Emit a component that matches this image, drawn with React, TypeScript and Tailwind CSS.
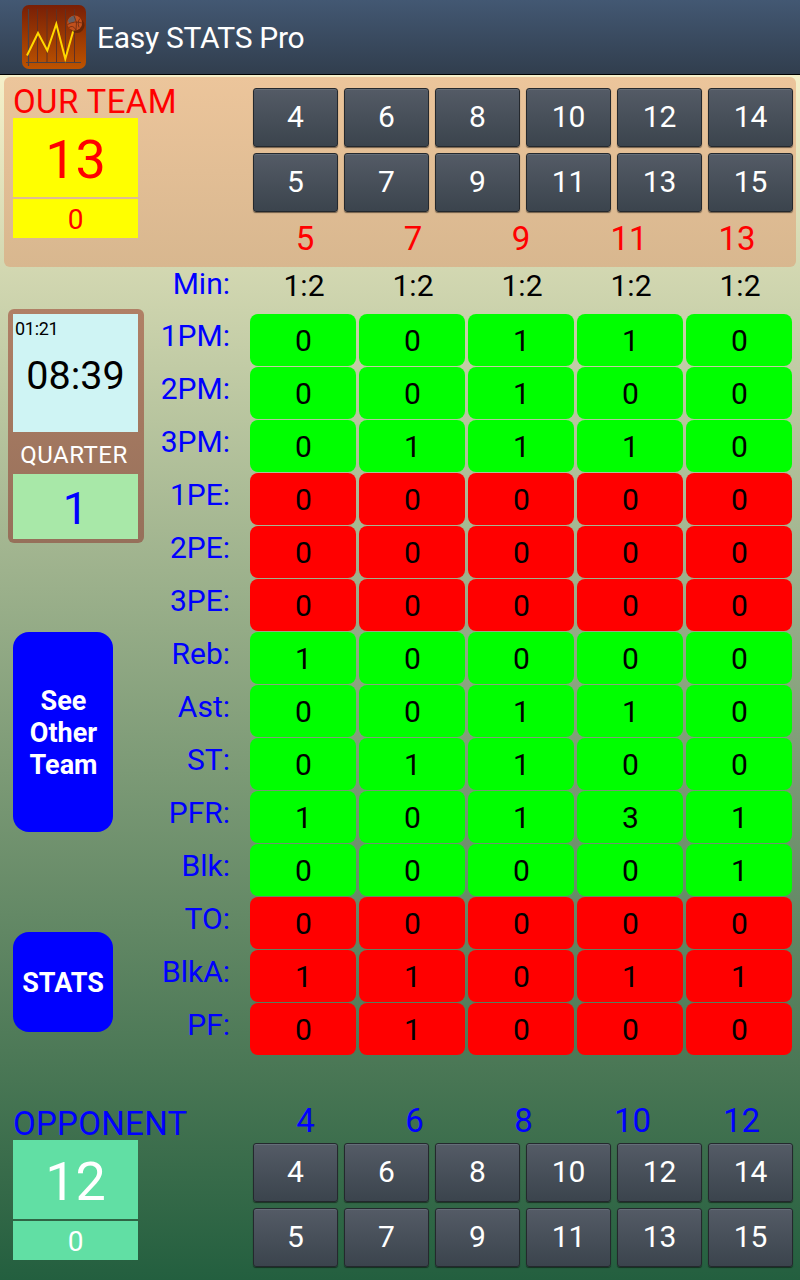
import React from 'react';
import clsx from 'clsx';

const players = [
  ['4', '6', '8', '10', '12', '14'],
  ['5', '7', '9', '11', '13', '15'],
];

const ourCourt = ['5', '7', '9', '11', '13'];
const opponentCourt = ['4', '6', '8', '10', '12'];

const stats = [
  { label: '1PM:', good: true, values: [0, 0, 1, 1, 0] },
  { label: '2PM:', good: true, values: [0, 0, 1, 0, 0] },
  { label: '3PM:', good: true, values: [0, 1, 1, 1, 0] },
  { label: '1PE:', good: false, values: [0, 0, 0, 0, 0] },
  { label: '2PE:', good: false, values: [0, 0, 0, 0, 0] },
  { label: '3PE:', good: false, values: [0, 0, 0, 0, 0] },
  { label: 'Reb:', good: true, values: [1, 0, 0, 0, 0] },
  { label: 'Ast:', good: true, values: [0, 0, 1, 1, 0] },
  { label: 'ST:', good: true, values: [0, 1, 1, 0, 0] },
  { label: 'PFR:', good: true, values: [1, 0, 1, 3, 1] },
  { label: 'Blk:', good: true, values: [0, 0, 0, 0, 1] },
  { label: 'TO:', good: false, values: [0, 0, 0, 0, 0] },
  { label: 'BlkA:', good: false, values: [1, 1, 0, 1, 1] },
  { label: 'PF:', good: false, values: [0, 1, 0, 0, 0] },
];

const AppIcon: React.FC = () => (
  <svg width="64" height="64" viewBox="0 0 64 64">
    <defs>
      <linearGradient id="court" x1="0" y1="0" x2="0" y2="1">
        <stop offset="0" stopColor="#781f06" />
        <stop offset="1" stopColor="#bd5300" />
      </linearGradient>
    </defs>
    <rect width="64" height="64" rx="7" fill="url(#court)" />
    <path d="M15.500 4v53M25 4v53M34.500 4v53M43.500 4v53M52.500 4v53" stroke="#5f3023" strokeWidth="1" />
    <path d="M6.500 4v57M4 57.500h55" stroke="#4a4245" strokeWidth="1.200" fill="none" />
    <path d="M5 50.500L16 28l9.300 17.500L34.300 19l9 35L51.500 25" stroke="#ffd800" strokeWidth="2" fill="none" />
    <circle cx="55" cy="20.500" r="7.500" fill="#4a1c08" opacity="0.6" />
    <circle cx="52.700" cy="18" r="7.500" fill="#c2501c" />
    <path d="M46 15.500a7.500 7.500 0 0 1 7-4.800l1 3.300-2 3-5 1z" fill="#666065" />
    <path d="M45.500 19.500q7-4 14.500-1.500M52 11q4 6 2 14M58 13.500q-3 3-1 9M47 22.500q4-3 7 2.500" stroke="#6a2a10" strokeWidth="0.8" fill="none" />
  </svg>
);

const PlayerPad: React.FC = () => (
  <div className="flex flex-col gap-1.5">
    {players.map((row, i) => (
      <div key={i} className="flex gap-1.5">
        {row.map((n) => (
          <button
            key={n}
            className="w-[85px] h-[59px] pb-0.5 rounded-[3px] border border-[#24282d] bg-linear-to-b from-[#545b66] to-[#3b444d] text-white text-[30px] leading-none shadow-[inset_0_1px_0_#646d78,0_1px_1px_rgba(0,0,0,0.5)]"
          >
            {n}
          </button>
        ))}
      </div>
    ))}
  </div>
);

type TeamProps = { name: string; score: string; fouls: string; our?: boolean };

const TeamScore: React.FC<TeamProps> = ({ name, score, fouls, our }) => {
  const box = our ? 'bg-[#ffff00] text-[#ff0000]' : 'bg-[#61dfa4] text-white';
  return (
    <div className="flex flex-col w-[240px]">
      <div
        className={clsx(
          'h-[38px] text-[33px] leading-[44px]',
          our ? 'text-[#ff0000] tracking-[0.4px]' : 'text-[#0000ff] tracking-[0.3px]'
        )}
      >
        {name}
      </div>
      <div className={clsx('w-[125px] h-[79px] text-[54px] leading-[83px] text-center', box)}>{score}</div>
      <div className={clsx('w-[125px] h-[39px] mt-0.5 text-[28px] leading-[42px] text-center', box)}>{fouls}</div>
    </div>
  );
};

const Clock: React.FC = () => (
  <div className="w-[136px] h-[234px] p-[5px] pb-1 pr-1.5 rounded-md bg-linear-to-b from-[#b08066] to-[#96705a]">
    <div className="h-[118px] bg-[#cff4f4] text-black">
      <div className="pl-0.5 pt-1 text-[18px] leading-[22px] -tracking-[0.3px]">01:21</div>
      <div className="pt-2.5 text-[39.5px] leading-[52px] text-center">08:39</div>
    </div>
    <div className="h-[42px] pr-[3px] text-[24px] leading-[46px] tracking-[0.5px] text-center text-white">QUARTER</div>
    <div className="h-[65px] bg-[#a8e8a8] text-[45px] leading-[69px] text-center text-[#0000ff]">1</div>
  </div>
);

const App: React.FC = () => {
  return (
    <div
      className="w-[800px] h-[1280px] overflow-hidden flex flex-col"
      style={{ fontFamily: 'Roboto, sans-serif' }}
    >
      <header className="h-[75px] shrink-0 flex items-center gap-[11px] pl-[22px] border-b border-black bg-linear-to-b from-[#435873] to-[#313e4e] text-white">
        <AppIcon />
        <h1 className="text-[30px] leading-none pt-0.5 -tracking-[0.3px]">Easy STATS Pro</h1>
      </header>

      <div className="h-[1205px] flex flex-col pt-0.5 bg-linear-to-b from-[#f5f0c9] to-[#235f3f]">
        <section className="mx-1 h-[190px] shrink-0 flex rounded-md bg-linear-to-b from-[#ecc59b] to-[#d8b78f] pl-[9px]">
          <div className="pt-[3px]">
            <TeamScore name="OUR TEAM" score="13" fouls="0" our />
          </div>
          <div className="pt-[11px]">
            <PlayerPad />
            <div className="flex pt-1.5 -ml-0.5 text-[33px] leading-[42px] text-center text-[#ff0000]">
              {ourCourt.map((n) => (
                <div key={n} className="w-[108px]">{n}</div>
              ))}
            </div>
          </div>
        </section>

        <main className="h-[829px] shrink-0 flex">
          <aside className="w-[150px] pt-[42px] pl-2">
            <Clock />
            <div className="pl-[5px]">
              <button className="mt-[89px] w-[100px] h-[200px] pt-0.5 pl-[9px] pr-2 rounded-2xl bg-[#0000ff] text-white text-[27px] leading-8 font-bold">
                See Other Team
              </button>
              <button className="block mt-[100px] w-[100px] h-[100px] pt-0.5 rounded-2xl bg-[#0000ff] text-white text-[27px] font-bold">
                STATS
              </button>
            </div>
          </aside>
          <div className="w-[80px] text-right text-[30px] text-[#0000ff]">
            <div className="h-[43px] leading-[34px]">Min:</div>
            {stats.map((s) => (
              <div key={s.label} className="h-[53px] leading-[52px]">{s.label}</div>
            ))}
          </div>
          <div className="pl-5 text-[30px] text-center text-black">
            <div className="flex gap-[3px] h-[47px] leading-[38px]">
              {ourCourt.map((n) => (
                <div key={n} className="w-[106px] pl-0.5">1:2</div>
              ))}
            </div>
            <div className="flex flex-col gap-px">
              {stats.map((s) => (
                <div key={s.label} className="flex gap-[3px]">
                  {s.values.map((v, i) => (
                    <div
                      key={i}
                      className={clsx(
                        'w-[106px] h-[52px] pl-px leading-[54px] rounded-lg',
                        s.good ? 'bg-[#00ff00]' : 'bg-[#ff0000]'
                      )}
                    >
                      {v}
                    </div>
                  ))}
                </div>
              ))}
            </div>
          </div>
        </main>

        <section className="flex pl-[13px]">
          <div className="pt-1.5">
            <TeamScore name="OPPONENT" score="12" fouls="0" />
          </div>
          <div>
            <div className="flex h-[47px] -ml-0.5 text-[33px] leading-[50px] text-center text-[#0000ff]">
              {opponentCourt.map((n) => (
                <div key={n} className="w-[109px]">{n}</div>
              ))}
            </div>
            <PlayerPad />
          </div>
        </section>
      </div>
    </div>
  );
};

export default App;
